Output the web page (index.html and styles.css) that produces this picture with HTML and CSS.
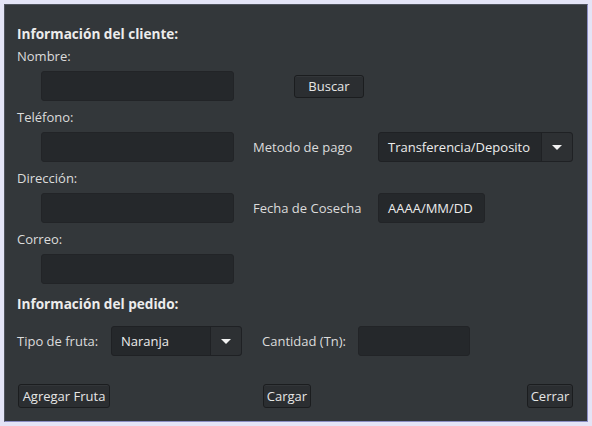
FILE: index.html
```html
<!DOCTYPE html>
<html lang="es">
<head>
<meta charset="utf-8">
<title>Información del cliente</title>
<link rel="stylesheet" href="styles.css">
</head>
<body>
<div class="window">
  <div class="content">
    <div class="title">Información del cliente:</div>
    <div class="grid">
      <div class="label span">Nombre:</div>
      <div class="entry c2"></div>
      <div class="c4"><button class="btn buscar">Buscar</button></div>

      <div class="label span">Teléfono:</div>
      <div class="entry c2"></div>
      <div class="label c4">Metodo de pago</div>
      <div class="combo c5"><span class="combo-text">Transferencia/Deposito</span><span class="combo-arrow"><span class="tri"></span></span></div>

      <div class="label span">Dirección:</div>
      <div class="entry c2"></div>
      <div class="label c4">Fecha de Cosecha</div>
      <div class="c5"><div class="entry date">AAAA/MM/DD</div></div>

      <div class="label span">Correo:</div>
      <div class="entry c2"></div>
    </div>

    <div class="title title2">Información del pedido:</div>
    <div class="order">
      <div class="label tipo">Tipo de fruta:</div>
      <div class="combo fruit"><span class="combo-text">Naranja</span><span class="combo-arrow"><span class="tri"></span></span></div>
      <div class="label cant">Cantidad (Tn):</div>
      <div class="entry qty"></div>
    </div>

    <div class="actions">
      <button class="btn agregar">Agregar Fruta</button>
      <button class="btn cargar">Cargar</button>
      <button class="btn cerrar">Cerrar</button>
    </div>
  </div>
</div>
</body>
</html>
```
FILE: styles.css
```css
html, body {
  margin: 0;
  padding: 0;
  background: #e4e4f6;
}
body {
  width: 592px;
  height: 426px;
  padding: 4px;
  box-sizing: border-box;
  font-family: "Open Sans", "Liberation Sans", sans-serif;
  font-size: 13px;
  color: #e2e2e2;
}
.window {
  width: 584px;
  height: 418px;
  box-sizing: border-box;
  border: 1px solid #50545e;
  border-right-color: #8c8ec4;
  border-bottom-color: #8c8ec4;
  background: #33373a;
}
.content {
  padding: 21px 14px 0 12px;
}
.title {
  font-weight: bold;
  font-size: 13.6px;
  height: 16px;
  line-height: 16px;
  color: #ececec;
}
.label {
  line-height: 16px;
  color: #dcdcdc;
  white-space: nowrap;
}
.grid {
  display: grid;
  grid-template-columns: 24px 193px 19px 125px 195px;
  grid-template-rows: 23px 30px 31px 30px 31px 30px 31px 30px;
  margin-top: 6px;
}
.grid > .span { grid-column: 1 / -1; align-self: end; margin-bottom: 7px; }
.grid > .c2 { grid-column: 2; }
.grid > .c4 { grid-column: 4; align-self: center; }
.grid > .c5 { grid-column: 5; }

.entry {
  height: 30px;
  box-sizing: border-box;
  background: #25282b;
  border: 1px solid #222427;
  border-radius: 3px;
}
.date {
  width: 107px;
  padding: 0 9px;
  line-height: 28px;
  color: #ececec;
}
.combo {
  display: flex;
  height: 30px;
  box-sizing: border-box;
  background: #25282b;
  border: 1px solid #1f2124;
  border-radius: 3px;
}
.combo-text {
  flex: 1;
  padding-left: 9px;
  line-height: 28px;
  color: #ececec;
  white-space: nowrap;
}
.combo-arrow {
  width: 30px;
  display: flex;
  align-items: center;
  justify-content: center;
  border-left: 1px solid #1f2124;
  background: #2d3033;
  border-radius: 0 3px 3px 0;
}
.tri {
  width: 0;
  height: 0;
  border-left: 5px solid transparent;
  border-right: 5px solid transparent;
  border-top: 5px solid #f2f2f2;
}
.btn {
  font-family: inherit;
  font-size: 13px;
  color: #e6e6e6;
  background: #2b2e31;
  border: 1px solid #1b1d1f;
  border-radius: 3px;
  box-shadow: inset 0 1px 0 rgba(255,255,255,0.04);
  height: 24px;
  padding: 0 2px;
  line-height: 20px;
  margin: 0;
  white-space: nowrap;
}
.buscar {
  margin-left: 41px;
  width: 70px;
  height: 23px;
  display: block;
}
.title2 {
  margin-top: 12px;
}
.order {
  display: flex;
  align-items: center;
  margin-top: 14px;
}
.tipo { width: 94px; }
.fruit { width: 131px; }
.cant { margin-left: 20px; width: 96px; }
.qty { width: 112px; }
.actions {
  display: flex;
  margin-top: 28px;
  padding-left: 1px;
}
.agregar { width: 92px; }
.cargar { margin-left: 153px; width: 48px; }
.cerrar { margin-left: auto; width: 46px; }
```
